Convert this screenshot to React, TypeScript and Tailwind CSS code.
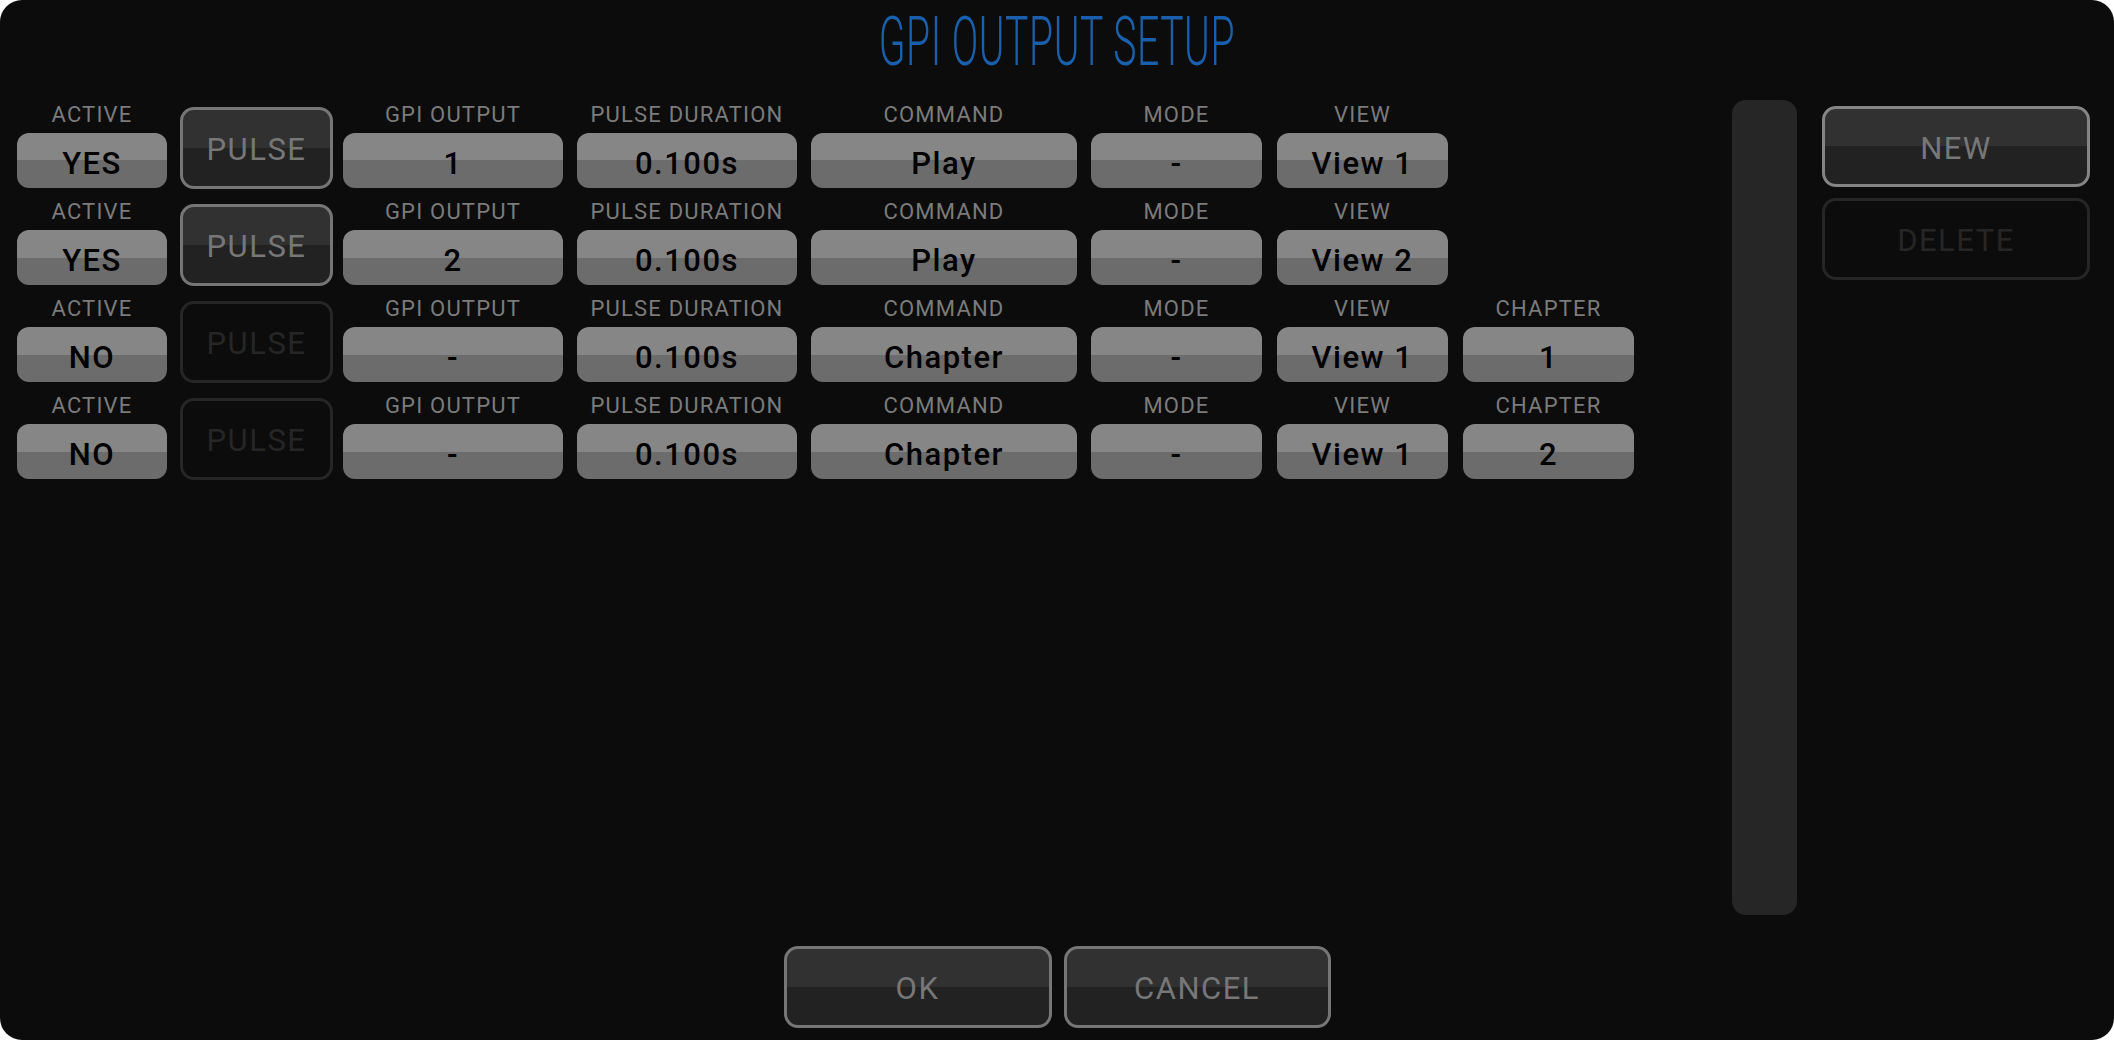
import React from "react";

type Row = {
  active: string;
  pulseOn: boolean;
  gpi: string;
  dur: string;
  cmd: string;
  mode: string;
  view: string;
  chapter?: string;
};

const rows: Row[] = [
  { active: "YES", pulseOn: true, gpi: "1", dur: "0.100s", cmd: "Play", mode: "-", view: "View 1" },
  { active: "YES", pulseOn: true, gpi: "2", dur: "0.100s", cmd: "Play", mode: "-", view: "View 2" },
  { active: "NO", pulseOn: false, gpi: "-", dur: "0.100s", cmd: "Chapter", mode: "-", view: "View 1", chapter: "1" },
  { active: "NO", pulseOn: false, gpi: "-", dur: "0.100s", cmd: "Chapter", mode: "-", view: "View 1", chapter: "2" },
];

const FONT = "font-['Roboto','Liberation_Sans',sans-serif]";

function Field({ label, value, w, ml }: { label: string; value: string; w: string; ml: string }) {
  return (
    <div className={`flex flex-col ${w} ${ml}`}>
      <div className="h-[26px] text-center text-[22px] leading-[26px] tracking-[1.2px] text-[#7b7b7b]">{label}</div>
      <div className="mt-[5px] flex h-[55px] items-center justify-center rounded-[12px] bg-[linear-gradient(to_bottom,#868686_50%,#6c6c6c_50%)] pt-[6px] text-[31px] font-medium leading-none tracking-[1.5px] text-black">
        {value}
      </div>
    </div>
  );
}

function DarkButton({ label, enabled, className }: { label: string; enabled: boolean; className: string }) {
  return (
    <div
      className={`flex items-center justify-center rounded-[14px] border-[3px] pt-[3px] text-[31px] leading-none tracking-[1.5px] ${
        enabled
          ? "border-[#767676] bg-[linear-gradient(to_bottom,#313131_50%,#222222_50%)] text-[#777777]"
          : "border-[#262626] bg-transparent text-[#262626]"
      } ${className}`}
    >
      {label}
    </div>
  );
}

export default function App() {
  return (
    <div className={`h-[1040px] w-[2114px] bg-white ${FONT}`}>
      <div className="flex h-full w-full flex-col overflow-hidden rounded-[22px] bg-[#0c0c0c]">
        {/* Title */}
        <div className="flex h-[100px] justify-center pt-[8px]">
          <span className="inline-block scale-x-[0.575] text-[68px] font-light leading-none tracking-[1px] text-[#1a5fab]">
            GPI OUTPUT SETUP
          </span>
        </div>

        {/* Main */}
        <div className="flex h-[815px]">
          <div className="flex flex-1 flex-col gap-[11px] pl-[17px] pt-[2px]">
            {rows.map((r, i) => (
              <div key={i} className="flex h-[86px] items-start">
                <Field label="ACTIVE" value={r.active} w="w-[150px]" ml="ml-0" />
                <DarkButton label="PULSE" enabled={r.pulseOn} className="ml-[13px] mt-[5px] h-[82px] w-[153px]" />
                <Field label="GPI OUTPUT" value={r.gpi} w="w-[220px]" ml="ml-[10px]" />
                <Field label="PULSE DURATION" value={r.dur} w="w-[220px]" ml="ml-[14px]" />
                <Field label="COMMAND" value={r.cmd} w="w-[266px]" ml="ml-[14px]" />
                <Field label="MODE" value={r.mode} w="w-[171px]" ml="ml-[14px]" />
                <Field label="VIEW" value={r.view} w="w-[171px]" ml="ml-[15px]" />
                {r.chapter && <Field label="CHAPTER" value={r.chapter} w="w-[171px]" ml="ml-[15px]" />}
              </div>
            ))}
          </div>

          {/* Scrollbar */}
          <div className="h-[815px] w-[65px] rounded-[14px] bg-[#262626]" />

          {/* Side buttons */}
          <div className="ml-[25px] mr-[24px] flex w-[268px] flex-col pt-[6px]">
            <DarkButton label="NEW" enabled={true} className="h-[81px] w-full !border-[#858585]" />
            <DarkButton label="DELETE" enabled={false} className="mt-[11px] h-[82px] w-full" />
          </div>
        </div>

        {/* Footer */}
        <div className="flex justify-center gap-[12px] pt-[31px]">
          <DarkButton label="OK" enabled={true} className="h-[82px] w-[268px]" />
          <DarkButton label="CANCEL" enabled={true} className="h-[82px] w-[267px]" />
        </div>
      </div>
    </div>
  );
}
